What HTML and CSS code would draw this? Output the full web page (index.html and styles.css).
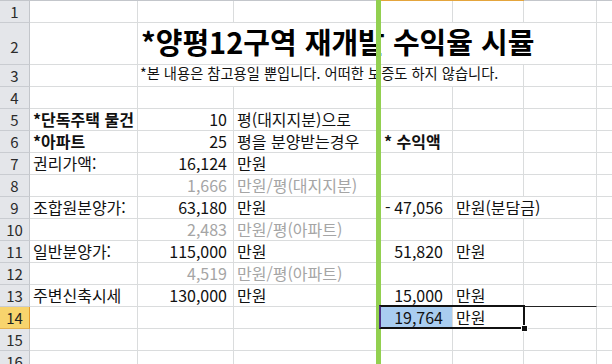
FILE: index.html
```html
<!DOCTYPE html>
<html lang="ko">
<head>
<meta charset="utf-8">
<link rel="stylesheet" href="styles.css">
</head>
<body>
<div class="sheet">
  <div class="ch"></div><div class="ch"></div><div class="ch"></div><div class="ch"></div><div class="ch sel"></div><div class="ch sel"></div><div class="ch"></div><div class="ch"></div>

  <div class="rh">1</div><div class="c"></div><div class="c"></div><div class="c"></div><div class="c"></div><div class="c"></div><div class="c"></div><div class="c last"></div>

  <div class="rh rh2">2</div><div class="c"></div><div class="c title span5">*양평12구역 재개발 수익율 시뮬</div><div class="c last"></div>

  <div class="rh">3</div><div class="c"></div><div class="c sub span4">*본 내용은 참고용일 뿐입니다. 어떠한 보증도 하지 않습니다.</div><div class="c"></div><div class="c last"></div>

  <div class="rh">4</div><div class="c"></div><div class="c"></div><div class="c"></div><div class="c"></div><div class="c"></div><div class="c"></div><div class="c last"></div>

  <div class="rh">5</div><div class="c b">*단독주택 물건</div><div class="c r">10</div><div class="c">평(대지지분)으로</div><div class="c"></div><div class="c"></div><div class="c"></div><div class="c last"></div>

  <div class="rh">6</div><div class="c b">*아파트</div><div class="c r">25</div><div class="c">평을 분양받는경우</div><div class="c b head">* 수익액</div><div class="c"></div><div class="c"></div><div class="c last"></div>

  <div class="rh">7</div><div class="c">권리가액:</div><div class="c r">16,124</div><div class="c">만원</div><div class="c"></div><div class="c"></div><div class="c"></div><div class="c last"></div>

  <div class="rh">8</div><div class="c"></div><div class="c r g">1,666</div><div class="c g">만원/평(대지지분)</div><div class="c"></div><div class="c"></div><div class="c"></div><div class="c last"></div>

  <div class="rh">9</div><div class="c">조합원분양가:</div><div class="c r">63,180</div><div class="c">만원</div><div class="c acc"><span>-</span><span>47,056</span></div><div class="c span2">만원(분담금)</div><div class="c last"></div>

  <div class="rh">10</div><div class="c"></div><div class="c r g">2,483</div><div class="c g">만원/평(아파트)</div><div class="c"></div><div class="c"></div><div class="c"></div><div class="c last"></div>

  <div class="rh">11</div><div class="c">일반분양가:</div><div class="c r">115,000</div><div class="c">만원</div><div class="c r rd">51,820</div><div class="c">만원</div><div class="c"></div><div class="c last"></div>

  <div class="rh">12</div><div class="c"></div><div class="c r g">4,519</div><div class="c g">만원/평(아파트)</div><div class="c"></div><div class="c"></div><div class="c"></div><div class="c last"></div>

  <div class="rh">13</div><div class="c">주변신축시세</div><div class="c r">130,000</div><div class="c">만원</div><div class="c r rd">15,000</div><div class="c">만원</div><div class="c dark"></div><div class="c last"></div>

  <div class="rh rh-sel">14</div><div class="c"></div><div class="c"></div><div class="c"></div><div class="c r rd hl">19,764</div><div class="c">만원</div><div class="c"></div><div class="c last"></div>

  <div class="rh">15</div><div class="c"></div><div class="c"></div><div class="c"></div><div class="c"></div><div class="c"></div><div class="c"></div><div class="c last"></div>

  <div class="rh">16</div><div class="c"></div><div class="c"></div><div class="c"></div><div class="c"></div><div class="c"></div><div class="c"></div><div class="c last"></div>

  <div class="bar"></div>
  <div class="selbox"><div class="handle"></div></div>
</div>
</body>
</html>
```

FILE: styles.css
```css
html, body {
  margin: 0;
  padding: 0;
  background: #ffffff;
  overflow: hidden;
}

body {
  font-family: "Noto Sans CJK KR", "Noto Sans", sans-serif;
  color: #111111;
}

.sheet {
  position: relative;
  display: grid;
  grid-template-columns: 30px 108px 96px 145px 74px 71px 73px 1fr;
  grid-template-rows: 1px 22px 42px repeat(14, 22px);
  width: 612px;
}

.ch {
  background: #c3c6cb;
}

.ch.sel {
  background: #e4a53c;
}

.rh {
  box-sizing: border-box;
  background: #e4e6ea;
  border-right: 1px solid #c3c6cb;
  border-bottom: 1px solid #c9ccd1;
  font-size: 15px;
  line-height: 21px;
  text-align: center;
  color: #2b2b2b;
}

.rh2 {
  padding-top: 13px;
}

.rh-sel {
  background: #f8d46d;
  border-right-color: #e19a2c;
  border-bottom-color: #e3b04f;
  color: #222222;
}

.c {
  box-sizing: border-box;
  border-right: 1px solid #dadcdd;
  border-bottom: 1px solid #dadcdd;
  font-size: 16px;
  line-height: 21px;
  padding: 0 3px;
  white-space: nowrap;
  min-width: 0;
}

.c.last {
  border-right: none;
}

.span5 { grid-column: span 5; }
.span4 { grid-column: span 4; }
.span2 { grid-column: span 2; }

.title {
  font-size: 29px;
  font-weight: 700;
  line-height: 30px;
  padding-top: 3px;
  padding-left: 3px;
  color: #000000;
}

.sub {
  font-size: 14.3px;
  line-height: 16px;
  padding-left: 2px;
  color: #111111;
}

.b {
  font-weight: 700;
}

.head {
  padding-left: 5px;
}

.r {
  text-align: right;
  padding-right: 6px;
}

.rd {
  padding-right: 9px;
}

.g {
  color: #a5a5a5;
}

.acc {
  display: flex;
  justify-content: space-between;
  padding-left: 6px;
  padding-right: 9px;
}

.hl {
  background: #a9cdf0;
}

.dark {
  border-bottom-color: #222222;
}

.bar {
  position: absolute;
  left: 376px;
  top: 0;
  width: 5px;
  height: 364px;
  background: #92d050;
}

.selbox {
  position: absolute;
  left: 379px;
  top: 305px;
  width: 146px;
  height: 24px;
  box-sizing: border-box;
  border: 2px solid #111111;
  border-left-color: #4e2f86;
}

.handle {
  position: absolute;
  right: -5px;
  bottom: -5px;
  width: 5px;
  height: 5px;
  background: #111111;
  border: 1px solid #ffffff;
}
```
